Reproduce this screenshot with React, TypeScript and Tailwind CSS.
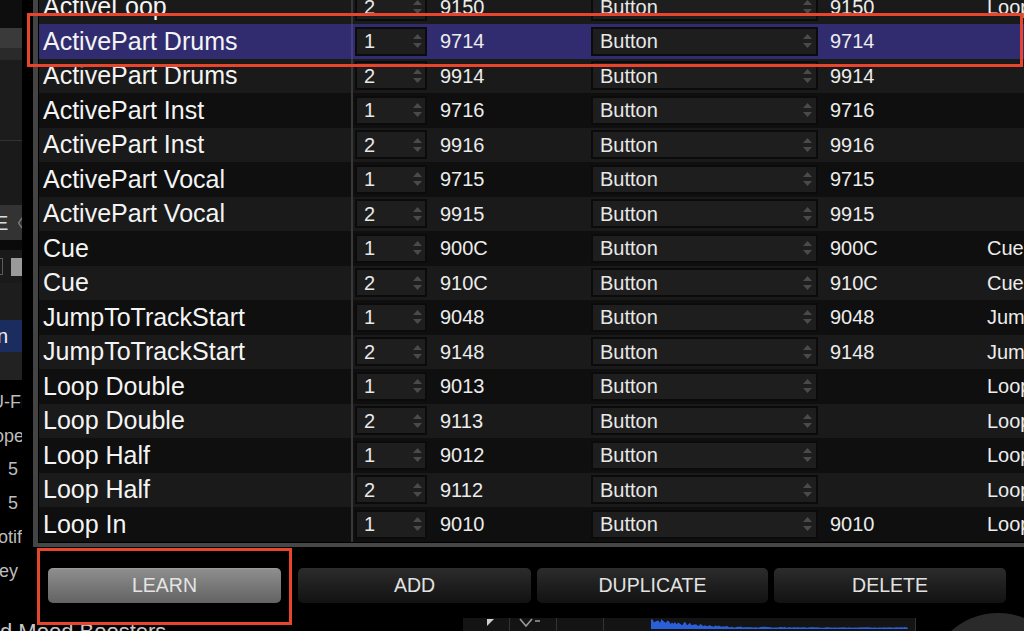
import React from 'react';

type Row = [string, string, string, string, string];

const rows: Row[] = [
  ['ActiveLoop', '2', '9150', '9150', 'Loop Roll'],
  ['ActivePart Drums', '1', '9714', '9714', ''],
  ['ActivePart Drums', '2', '9914', '9914', ''],
  ['ActivePart Inst', '1', '9716', '9716', ''],
  ['ActivePart Inst', '2', '9916', '9916', ''],
  ['ActivePart Vocal', '1', '9715', '9715', ''],
  ['ActivePart Vocal', '2', '9915', '9915', ''],
  ['Cue', '1', '900C', '900C', 'Cue'],
  ['Cue', '2', '910C', '910C', 'Cue'],
  ['JumpToTrackStart', '1', '9048', '9048', 'Jump to start'],
  ['JumpToTrackStart', '2', '9148', '9148', 'Jump to start'],
  ['Loop Double', '1', '9013', '', 'Loop Double'],
  ['Loop Double', '2', '9113', '', 'Loop Double'],
  ['Loop Half', '1', '9012', '', 'Loop Half'],
  ['Loop Half', '2', '9112', '', 'Loop Half'],
  ['Loop In', '1', '9010', '9010', 'Loop In'],
];

const SELECTED = 1;

// spiky waveform outline, tall on the left and thinning out to the right
function waveformPath(): string {
  const w = 257;
  const top: string[] = [];
  let seed = 7;
  const rnd = () => {
    seed = (seed * 9301 + 49297) % 233280;
    return seed / 233280;
  };
  for (let x = 0; x <= w; x += 1.5) {
    const base = Math.max(1.6, 9 * Math.exp(-x / 55));
    const jitter = x < 140 ? (rnd() - 0.4) * base * 0.7 : (rnd() - 0.5) * 0.6;
    const h = Math.max(1.2, Math.min(10, base + jitter));
    top.push(`${x.toFixed(1)},${(11 - h).toFixed(2)}`);
  }
  return `M0,11 L${top.join(' L')} L${w},11 Z`;
}

const WAVE = waveformPath();

function Arrows() {
  return (
    <svg width="9" height="14" viewBox="0 0 9 14" className="shrink-0">
      <path d="M4.5 0 L9 5 L0 5 Z" fill="#4a4a4a" />
      <path d="M0 9 L9 9 L4.5 14 Z" fill="#4a4a4a" />
    </svg>
  );
}

function Spinner({ value, className }: { value: string; className: string }) {
  return (
    <div
      className={`flex items-center justify-between h-[29px] bg-[#1e1e1e] border-2 border-[#0b0b0b] pl-[7px] text-[20px] text-[#e8e8e8] shrink-0 ${className}`}
    >
      <span className="leading-none">{value}</span>
      <Arrows />
    </div>
  );
}

function TableRow({ row, index }: { row: Row; index: number }) {
  const [name, channel, code, out, action] = row;
  const selected = index === SELECTED;
  const bg = selected ? 'bg-[#302c6f]' : index % 2 === 0 ? 'bg-[#1a1a1a]' : 'bg-[#0f0f0f]';
  return (
    <div className={`flex items-center h-[34.5px] shrink-0 whitespace-nowrap ${bg}`}>
      <div
        className={`w-[314px] h-full flex items-center pl-[4px] text-[25px] text-[#f4f4f4] border-r-2 shrink-0 ${
          selected ? 'border-[#433f80]' : 'border-[#383838]'
        }`}
      >
        {name}
      </div>
      <Spinner value={channel} className="ml-[2px] w-[72px] pr-[3px]" />
      <div className="ml-[13px] w-[151px] text-[20px] text-[#ececec] shrink-0">{code}</div>
      <Spinner value="Button" className="w-[227px] pr-[4px]" />
      <div className="ml-[12px] w-[157px] text-[20px] text-[#ececec] shrink-0">{out}</div>
      <div className="text-[20px] text-[#ececec]">{action}</div>
    </div>
  );
}

function SideText({ text, shift }: { text: string; shift: string }) {
  return (
    <div className="h-[33.6px] flex items-center justify-end overflow-hidden whitespace-nowrap text-[18px] text-[#bdbdbd] shrink-0">
      <span className={shift}>{text}</span>
    </div>
  );
}

function SideStrip() {
  return (
    <div className="w-[22px] h-full flex flex-col shrink-0 overflow-hidden">
      <div className="h-[28px] bg-[#0e0e0e] shrink-0" />
      <div className="h-[20px] bg-[#3a3a3a] shrink-0" />
      <div className="h-[12px] bg-[#2a2a2a] shrink-0" />
      <div className="h-[81px] bg-[#1c1c1c] border-b border-[#333] shrink-0" />
      <div className="h-[64px] bg-[#1a1a1a] shrink-0" />
      <div className="h-[35px] bg-[#333] flex items-center shrink-0">
        <span className="ml-[-5px] text-[20px] leading-none text-[#dcdcdc]">E</span>
        <svg width="4" height="12" viewBox="0 0 4 12" className="ml-auto">
          <path d="M4 1 L0.5 6 L4 11" stroke="#777" strokeWidth="1.5" fill="none" />
        </svg>
      </div>
      <div className="h-[10px] bg-[#0a0a0a] shrink-0" />
      <div className="h-[33px] bg-[#1a1a1a] flex items-center shrink-0">
        <div className="ml-[-11px] w-[14px] h-[17px] border border-[#5a5a5a] shrink-0" />
        <div className="ml-auto w-[11px] h-[18px] bg-[#9a9a9a] shrink-0" />
      </div>
      <div className="h-[37px] bg-[#1d1d1d] shrink-0" />
      <div className="h-[32px] bg-[#1b2c5e] flex items-center shrink-0">
        <span className="ml-[-3px] text-[20px] leading-none text-[#f0f0f0]">n</span>
      </div>
      <div className="h-[28px] bg-[#222] shrink-0" />
      <div className="h-[6px] shrink-0" />
      <SideText text="DJ U-Fi" shift="mr-[-3px]" />
      <SideText text="Envelope" shift="mr-[-2px]" />
      <SideText text="5" shift="mr-[4px]" />
      <SideText text="5" shift="mr-[4px]" />
      <SideText text="Motif" shift="mr-[0px]" />
    </div>
  );
}

function ActionButton({ label, primary, className }: { label: string; primary?: boolean; className: string }) {
  return (
    <div
      className={`h-[35px] rounded-[5px] flex items-center justify-center text-[19.5px] shrink-0 ${
        primary
          ? 'bg-gradient-to-b from-[#8e8e8e] to-[#636363] text-[#e4e4e4] border-t border-[#9a9a9a]'
          : 'bg-gradient-to-b from-[#2c2c2c] to-[#121212] text-[#e2e2e2]'
      } ${className}`}
    >
      {label}
    </div>
  );
}

export default function App() {
  return (
    <div className="relative w-[1024px] h-[631px] bg-black overflow-hidden font-['Liberation_Sans',Arial,sans-serif]">
      {/* mapping table */}
      <div className="flex h-[547px]">
        <SideStrip />
        <div className="w-[11px] shrink-0" />
        <div className="flex-1 flex flex-col overflow-hidden border-l-[5px] border-l-[#444] border-b-4 border-b-[#474747] pl-px">
          <div className="flex flex-col mt-[-10.5px]">
            {rows.map((r, i) => (
              <TableRow key={i} row={r} index={i} />
            ))}
          </div>
        </div>
      </div>

      {/* buttons */}
      <div className="flex h-[68px]">
        <div className="w-[48px] shrink-0 flex flex-col pt-[13px]">
          <div className="w-[22px] h-[22px] flex items-center justify-end overflow-hidden whitespace-nowrap text-[18px] text-[#bdbdbd]">
            <span className="mr-[4px]">Key</span>
          </div>
        </div>
        <ActionButton label="LEARN" primary className="mt-[21px] w-[233px]" />
        <ActionButton label="ADD" className="mt-[21px] ml-[17px] w-[233px]" />
        <ActionButton label="DUPLICATE" className="mt-[21px] ml-[6px] w-[231px]" />
        <ActionButton label="DELETE" className="mt-[21px] ml-[6px] w-[232px]" />
      </div>

      {/* strip of the panel below */}
      <div className="flex h-[16px] items-start">
        <div className="w-[463px] h-full shrink-0 overflow-hidden whitespace-nowrap pt-[6px] text-[22px] leading-none text-[#c8c8c8]">
          d Mood Boosters
        </div>
        <div className="flex h-[13px] mt-[3px] bg-[#141414]">
          <div className="w-[47px] border-r border-[#333]">
            <svg width="7" height="7" viewBox="0 0 7 7" className="ml-[24px] mt-[1px]">
              <path d="M0 0 L7 0 L0 7 Z" fill="#d0d0d0" />
            </svg>
          </div>
          <div className="w-[47px] border-r border-[#333]">
            <svg width="24" height="10" viewBox="0 0 24 10" className="ml-[8px]">
              <path d="M2 1 L8 8 L14 1 M17 3 L22 3" stroke="#9a9a9a" strokeWidth="1.6" fill="none" />
            </svg>
          </div>
          <div className="w-[47px] border-r border-[#333]" />
          <div className="w-[312px] border-r border-[#333]">
            <svg width="257" height="11" viewBox="0 0 257 11" className="ml-[47px]">
              <path d={WAVE} fill="#2b5fd9" />
            </svg>
          </div>
        </div>
        <div className="w-[12px] shrink-0" />
        <div className="w-[140px] h-[140px] rounded-full bg-[#2a2a2a] shrink-0 mt-[-2px]" />
      </div>

      {/* red annotation boxes */}
      <div className="absolute left-[27px] top-[13px] w-[996px] h-[54px] border-[3px] border-[#e8452f]" />
      <div className="absolute left-[37px] top-[548px] w-[255px] h-[77px] border-[3px] border-[#e8452f]" />
    </div>
  );
}
